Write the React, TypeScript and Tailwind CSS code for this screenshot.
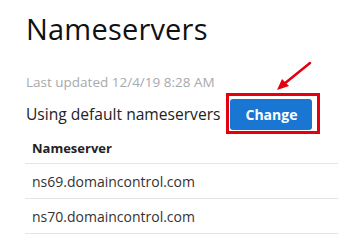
import React from "react";

export default function App() {
  return (
    <div
      className="relative w-[338px] h-[248px] overflow-hidden bg-white text-[#111]"
      style={{ fontFamily: '"Open Sans", "Noto Sans", sans-serif' }}
    >
      <div className="pl-[26px] pt-[11px]">
        <h1 className="text-[29px] leading-[36px] font-normal tracking-[0.2px] text-[#111]">Nameservers</h1>
        <div className="mt-[27px] text-[13.5px] leading-[16px] text-[#a7a9ac]">Last updated 12/4/19 8:28 AM</div>
        <div className="mt-[3px] flex items-center">
          <span className="text-[15.6px] leading-[20px] text-[#222]">Using default nameservers</span>
          <div className="ml-[6px] border-[3px] border-[#e3000f] pl-[1px] pr-[5px] pt-[3px] pb-[1px]">
            <button className="block w-[82px] h-[31px] rounded-[3px] bg-[#1976d2] text-white text-[14px] font-bold">
              Change
            </button>
          </div>
        </div>
        <div className="-ml-[1px] mt-[1px]">
          <div className="h-[29px] flex items-center pl-[7px] border-b border-[#e5e5e5] text-[13px] font-bold text-[#222]">
            Nameserver
          </div>
          <div className="h-[35px] flex items-center pl-[7px] border-b border-[#e5e5e5] text-[14px] text-[#333]">
            ns69.domaincontrol.com
          </div>
          <div className="h-[35px] flex items-center pl-[7px] border-b border-[#e5e5e5] text-[14px] text-[#333]">
            ns70.domaincontrol.com
          </div>
        </div>
      </div>
      <svg className="absolute left-[270px] top-[58px]" width="46" height="38" viewBox="0 0 46 38">
        <line x1="40" y1="5" x2="14" y2="26" stroke="#e3000f" strokeWidth="2.5" strokeLinecap="round" />
        <polygon points="7,32 12,21 19,28" fill="#e3000f" />
      </svg>
    </div>
  );
}
